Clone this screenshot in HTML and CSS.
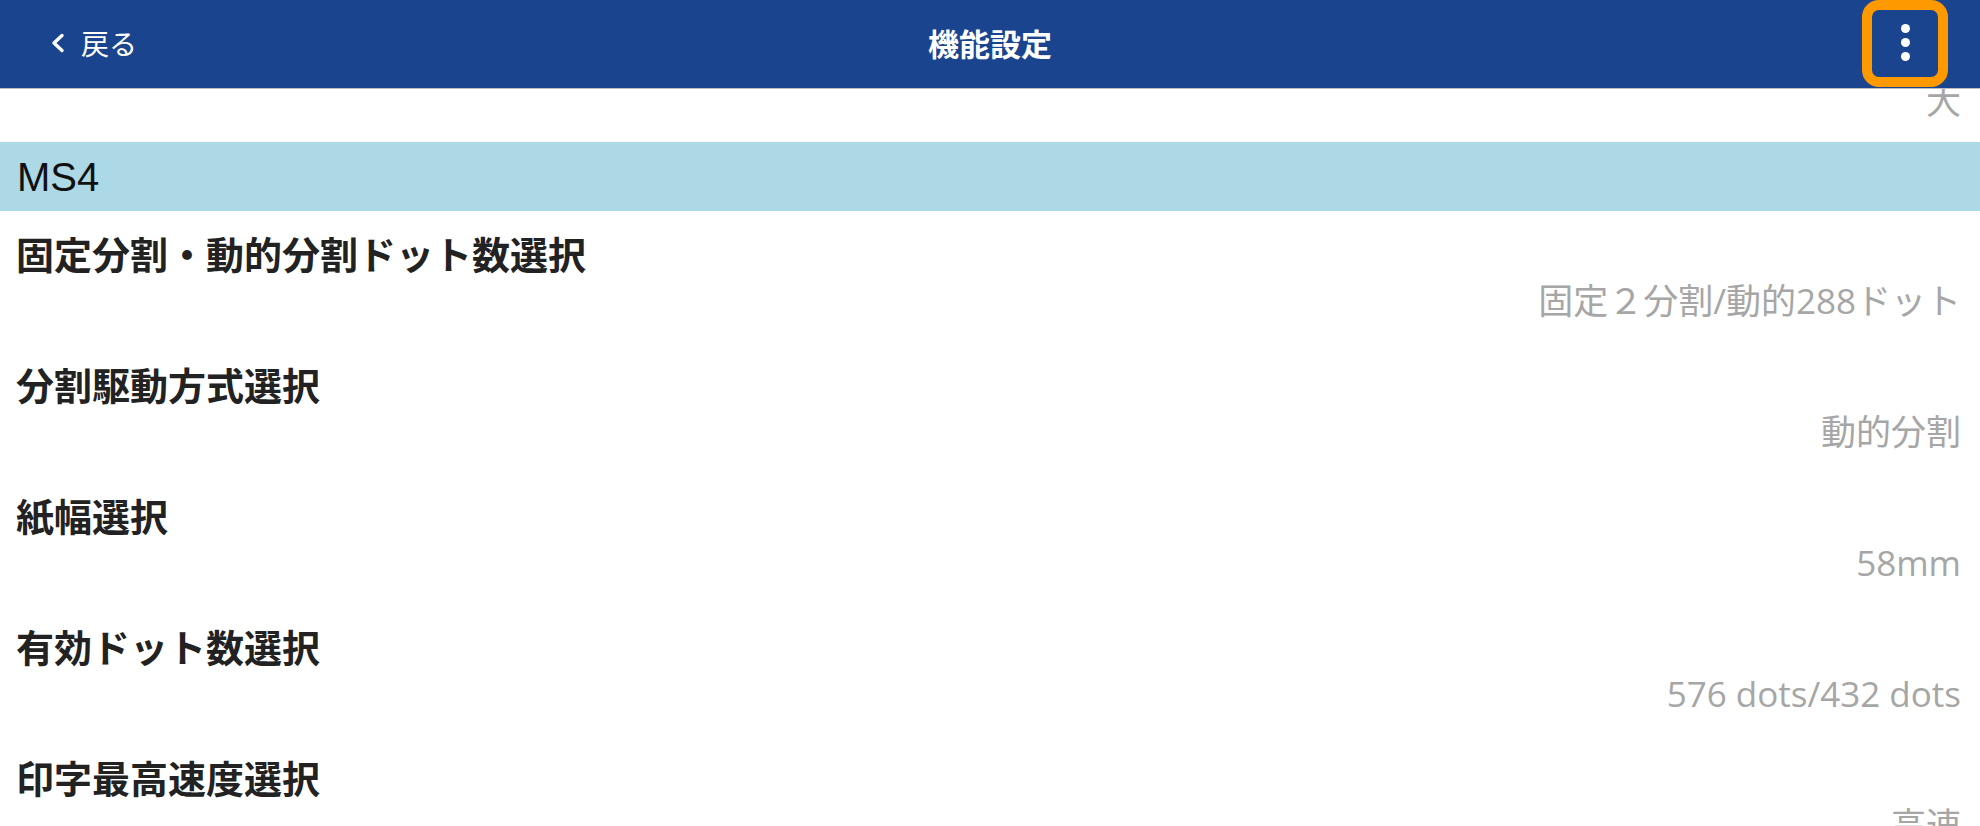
FILE: index.html
```html
<!DOCTYPE html>
<html lang="ja">
<head>
  <meta charset="UTF-8" />
  <title>機能設定</title>
  <link rel="stylesheet" href="styles.css">
</head>
<body>

  <header class="navbar">
    <a class="nav-back" href="#">
      <svg width="15" height="20" viewBox="0 0 15 20">
        <polyline points="12,2.5 4,10 12,17.5" fill="none" stroke="#fff" stroke-width="3.4" stroke-linecap="round" stroke-linejoin="round" />
      </svg>
      <span>戻る</span>
    </a>
    <h1 class="nav-title">機能設定</h1>
    <div class="nav-actions">
      <button class="menu-btn" type="button">
        <span class="dot"></span>
        <span class="dot"></span>
        <span class="dot"></span>
      </button>
    </div>
  </header>

  <main class="settings">
    <div class="settings-list">
      <!-- row scrolled up under the bar -->
      <div class="setting-row">
        <div class="setting-name"></div>
        <div class="setting-value">大</div>
      </div>

      <div class="section-head">MS4</div>

      <div class="setting-row">
        <div class="setting-name">固定分割・動的分割ドット数選択</div>
        <div class="setting-value">固定２分割/動的288ドット</div>
      </div>
      <div class="setting-row">
        <div class="setting-name">分割駆動方式選択</div>
        <div class="setting-value">動的分割</div>
      </div>
      <div class="setting-row">
        <div class="setting-name">紙幅選択</div>
        <div class="setting-value">58mm</div>
      </div>
      <div class="setting-row">
        <div class="setting-name">有効ドット数選択</div>
        <div class="setting-value">576 dots/432 dots</div>
      </div>
      <div class="setting-row">
        <div class="setting-name">印字最高速度選択</div>
        <div class="setting-value">高速</div>
      </div>
    </div>
  </main>

</body>
</html>
```

FILE: styles.css
```css
html, body {
  margin: 0;
  height: 100%;
  overflow: hidden;
}

body {
  background: #fff;
  font-family: "Liberation Sans", "Noto Sans CJK JP", sans-serif;
  color: #222;
}

.navbar {
  height: 88px;
  background: #1a458e;
  border-bottom: 1px solid #bcbcbc;
  display: grid;
  grid-template-columns: 1fr auto 1fr;
  align-items: center;
  color: #fff;
  position: relative;
  z-index: 1;
}

.nav-back {
  display: flex;
  align-items: center;
  gap: 16px;
  padding-left: 50px;
  color: #fff;
  text-decoration: none;
  font-family: "Noto Sans CJK JP", sans-serif;
  font-size: 28px;
  justify-self: start;
  margin-top: -2px;
}

.nav-back svg {
  display: block;
}

.nav-title {
  margin: 0;
  font-family: "Noto Sans CJK JP", sans-serif;
  font-size: 31px;
  font-weight: bold;
  margin-top: -3px;
}

.nav-actions {
  justify-self: end;
  align-self: start;
  padding-right: 32px;
}

.menu-btn {
  width: 86px;
  height: 87px;
  box-sizing: border-box;
  border: 10px solid #ff9900;
  border-radius: 17px;
  background: transparent;
  padding: 0 0 3px;
  display: flex;
  flex-direction: column;
  align-items: center;
  justify-content: center;
  gap: 5px;
  cursor: pointer;
}

.menu-btn .dot {
  width: 9px;
  height: 9px;
  border-radius: 50%;
  background: #fff;
}

.settings {
  height: calc(100% - 89px);
  overflow: hidden;
}

.settings-list {
  margin-top: -78px;
}

.section-head {
  height: 69px;
  background: #add8e6;
  color: #111;
  font-size: 40px;
  line-height: 71px;
  padding-left: 17px;
}

.setting-row {
  padding: 19px 19px 15px 16px;
}

.setting-name {
  height: 48px;
  line-height: 46px;
  font-family: "Noto Sans CJK JP", sans-serif;
  font-size: 38px;
  font-weight: bold;
  color: #222;
  white-space: nowrap;
}

.setting-value {
  height: 49px;
  line-height: 46px;
  font-family: "Open Sans", "Noto Sans CJK JP", sans-serif;
  font-size: 35px;
  color: #a6a6a6;
  text-align: right;
  white-space: nowrap;
}
```
